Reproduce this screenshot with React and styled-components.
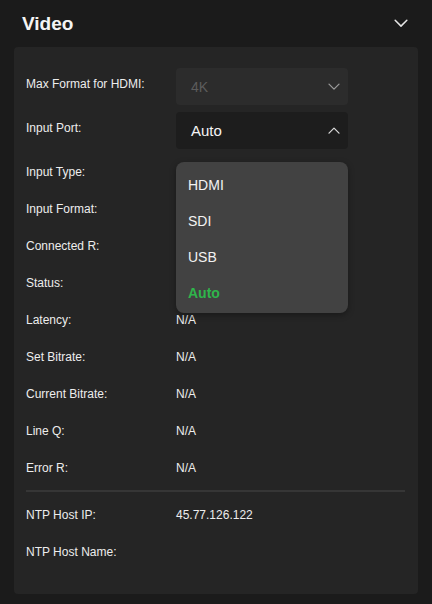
import React from 'react';
import styled, { createGlobalStyle } from 'styled-components';

const GlobalStyle = createGlobalStyle`
  html, body {
    margin: 0;
    padding: 0;
    background: #1b1b1b;
  }
  body {
    font-family: "Liberation Sans", Arial, sans-serif;
    color: #f2f2f2;
  }
`;

const Page = styled.div`
  width: 432px;
  min-height: 604px;
  background: #1b1b1b;
  box-sizing: border-box;
  padding: 0 14px 10px;
`;

const Header = styled.div`
  height: 47px;
  display: flex;
  align-items: center;
  justify-content: space-between;
  padding: 0 10px 0 8px;
  box-sizing: border-box;
`;

const Title = styled.h2`
  margin: 0;
  font-size: 19px;
  font-weight: 700;
  color: #f4f4f4;
`;

const Panel = styled.div`
  background: #252525;
  border-radius: 4px;
  padding: 21px 12px 24px;
`;

const Row = styled.div`
  display: grid;
  grid-template-columns: 150px 172px;
  align-items: center;
  min-height: 37px;
  margin-top: ${(p) => p.$gap || 0}px;
  position: relative;
`;

const Label = styled.div`
  font-size: 12px;
  color: #ededed;
  padding-bottom: ${(p) => (p.$raised ? '6px' : '0')};
`;

const Value = styled.div`
  font-size: 12px;
  color: #ededed;
`;

const Select = styled.div`
  height: 37px;
  border-radius: 4px;
  background: ${(p) => (p.$disabled ? '#2c2c2c' : '#1d1d1d')};
  color: ${(p) => (p.$disabled ? '#5c5c5c' : '#f4f4f4')};
  font-size: ${(p) => (p.$disabled ? '14px' : '15px')};
  display: flex;
  align-items: center;
  justify-content: space-between;
  padding: 0 8px 0 15px;
  box-sizing: border-box;
`;

const Menu = styled.div`
  position: absolute;
  left: 150px;
  top: 50px;
  width: 172px;
  height: 151px;
  box-sizing: border-box;
  background: #424242;
  border-radius: 8px;
  padding: 5px 0;
  z-index: 2;
  box-shadow: 0 2px 6px rgba(0, 0, 0, 0.35);
`;

const MenuItem = styled.div`
  height: 36px;
  display: flex;
  align-items: center;
  padding-left: 12px;
  font-size: 14px;
  color: ${(p) => (p.$active ? '#2fb54b' : '#f2f2f2')};
  font-weight: ${(p) => (p.$active ? 700 : 400)};
`;

const Divider = styled.div`
  height: 2px;
  background: #363636;
  margin: 4px 1px 4px 0;
  width: 379px;
`;

const Chevron = ({ up, size = 12, color = '#cfcfcf' }) => (
  <svg width={size} height={size * 0.6} viewBox="0 0 12 7" fill="none">
    <path
      d={up ? 'M1 6 L6 1 L11 6' : 'M1 1 L6 6 L11 1'}
      stroke={color}
      strokeWidth="1.3"
      strokeLinecap="round"
      strokeLinejoin="round"
    />
  </svg>
);

const infoRows = [
  ['Input Type:', ''],
  ['Input Format:', ''],
  ['Connected R:', ''],
  ['Status:', ''],
  ['Latency:', 'N/A'],
  ['Set Bitrate:', 'N/A'],
  ['Current Bitrate:', 'N/A'],
  ['Line Q:', 'N/A'],
  ['Error R:', 'N/A'],
];

const ports = ['HDMI', 'SDI', 'USB', 'Auto'];

export default function App() {
  return (
    <>
      <GlobalStyle />
      <Page>
        <Header>
          <Title>Video</Title>
          <Chevron size={14} color="#e6e6e6" />
        </Header>
        <Panel>
          <Row>
            <Label $raised>Max Format for HDMI:</Label>
            <Select $disabled>
              <span>4K</span>
              <Chevron color="#9a9a9a" />
            </Select>
          </Row>
          <Row $gap={7}>
            <Label $raised>Input Port:</Label>
            <Select>
              <span>Auto</span>
              <Chevron up color="#d8d8d8" />
            </Select>
            <Menu>
              {ports.map((p) => (
                <MenuItem key={p} $active={p === 'Auto'}>
                  {p}
                </MenuItem>
              ))}
            </Menu>
          </Row>
          {infoRows.map(([l, v], i) => (
            <Row key={l} $gap={i === 0 ? 4 : 0}>
              <Label>{l}</Label>
              <Value>{v}</Value>
            </Row>
          ))}
          <Divider />
          <Row>
            <Label>NTP Host IP:</Label>
            <Value>45.77.126.122</Value>
          </Row>
          <Row>
            <Label>NTP Host Name:</Label>
            <Value></Value>
          </Row>
        </Panel>
      </Page>
    </>
  );
}
